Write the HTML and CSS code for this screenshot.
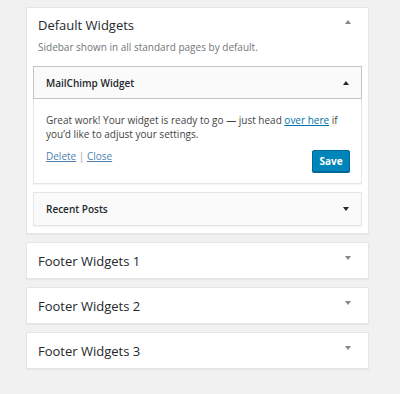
FILE: index.html
```html
<!DOCTYPE html>
<html lang="en">
<head>
  <meta charset="UTF-8" />
  <meta name="viewport" content="width=device-width, initial-scale=1.0" />
  <title>Widgets</title>
  <link rel="stylesheet" href="styles.css">
</head>
<body>
  <div class="sidebars">
    <div class="sidebar open">
      <div class="sidebar-head">
        <h2>Default Widgets</h2>
        <span class="arrow up"></span>
      </div>
      <p class="sidebar-desc">Sidebar shown in all standard pages by default.</p>

      <div class="widget expanded">
        <div class="widget-top">
          <h3>MailChimp Widget</h3>
          <span class="arrow up dark"></span>
        </div>
        <div class="widget-inside">
          <p>Great work! Your widget is ready to go — just head <a href="#">over here</a> if you’d like to adjust your settings.</p>
          <div class="widget-actions">
            <div class="links">
              <a href="#">Delete</a> <span class="sep">|</span> <a href="#">Close</a>
            </div>
            <button class="save-btn">Save</button>
          </div>
        </div>
      </div>

      <div class="widget">
        <div class="widget-top">
          <h3>Recent Posts</h3>
          <span class="arrow down dark"></span>
        </div>
      </div>
    </div>

    <div class="sidebar">
      <div class="sidebar-head">
        <h2>Footer Widgets 1</h2>
        <span class="arrow down"></span>
      </div>
    </div>

    <div class="sidebar">
      <div class="sidebar-head">
        <h2>Footer Widgets 2</h2>
        <span class="arrow down"></span>
      </div>
    </div>

    <div class="sidebar">
      <div class="sidebar-head">
        <h2>Footer Widgets 3</h2>
        <span class="arrow down"></span>
      </div>
    </div>
  </div>
</body>
</html>
```

FILE: styles.css
```css
body {
  margin: 0;
  padding: 0;
  background: #f1f1f1;
  font-family: 'Open Sans', sans-serif;
  color: #444;
}

.sidebars {
  width: 343px;
  padding: 7px 0 0 26px;
}

.sidebar {
  background: #fff;
  border: 1px solid #e5e5e5;
  box-shadow: 0 1px 1px rgba(0, 0, 0, 0.04);
  margin-bottom: 8px;
}

.sidebar.open {
  padding: 0 6px 7px;
}

.sidebar-head {
  display: flex;
  justify-content: space-between;
  align-items: center;
  height: 35px;
  padding: 0 17px 0 11px;
}

.sidebar.open .sidebar-head {
  padding: 0 11px 0 5px;
  height: 34px;
}

.sidebar-head h2 {
  margin: 0;
  font-size: 13px;
  font-weight: 400;
  color: #23282d;
}

.sidebar-desc {
  margin: 0 0 14px 5px;
  font-size: 10px;
  line-height: 10px;
  color: #72777c;
}

.arrow {
  width: 0;
  height: 0;
  border-left: 3.5px solid transparent;
  border-right: 3.5px solid transparent;
  margin-top: -6px;
}

.arrow.up {
  border-bottom: 4px solid #82878c;
}

.arrow.down {
  border-top: 4px solid #82878c;
}

.arrow.dark.up {
  border-bottom-color: #23282d;
  margin-top: 0;
}

.arrow.dark.down {
  border-top-color: #23282d;
  margin-top: 0;
}

.widget {
  background: #fff;
  border: 1px solid #e5e5e5;
  box-shadow: 0 1px 1px rgba(0, 0, 0, 0.04);
  margin-top: 8px;
}

.widget.expanded {
  margin-top: 0;
}

.widget-top {
  display: flex;
  justify-content: space-between;
  align-items: center;
  height: 32px;
  padding: 0 12px 0 12px;
  background: #fafafa;
}

.widget.expanded .widget-top {
  height: 31px;
  border: 1px solid #c3c4c7;
  margin: -1px -1px 0;
  padding: 0 12px 0 12px;
}

.widget-top h3 {
  margin: 0;
  font-size: 10px;
  font-weight: 600;
  color: #23282d;
}

.widget-inside {
  padding: 14px 11px 11px 12px;
}

.widget-inside p {
  margin: 0;
  font-size: 10px;
  line-height: 14px;
  color: #444;
}

.widget-inside a {
  color: #0073aa;
}

.widget-actions {
  display: flex;
  justify-content: space-between;
  align-items: flex-start;
  margin-top: 8px;
}

.links {
  font-size: 10px;
  line-height: 14px;
}

.links a {
  color: #4f7fb0;
}

.links .sep {
  color: #999;
}

.save-btn {
  margin: 1px 0 0;
  padding: 0;
  width: 38px;
  height: 22px;
  background: #0085ba;
  border: 1px solid #006799;
  border-radius: 2px;
  box-shadow: 0 1px 0 #006799;
  color: #fff;
  font-family: 'Open Sans', sans-serif;
  font-size: 10px;
  font-weight: 700;
  cursor: pointer;
}
```
